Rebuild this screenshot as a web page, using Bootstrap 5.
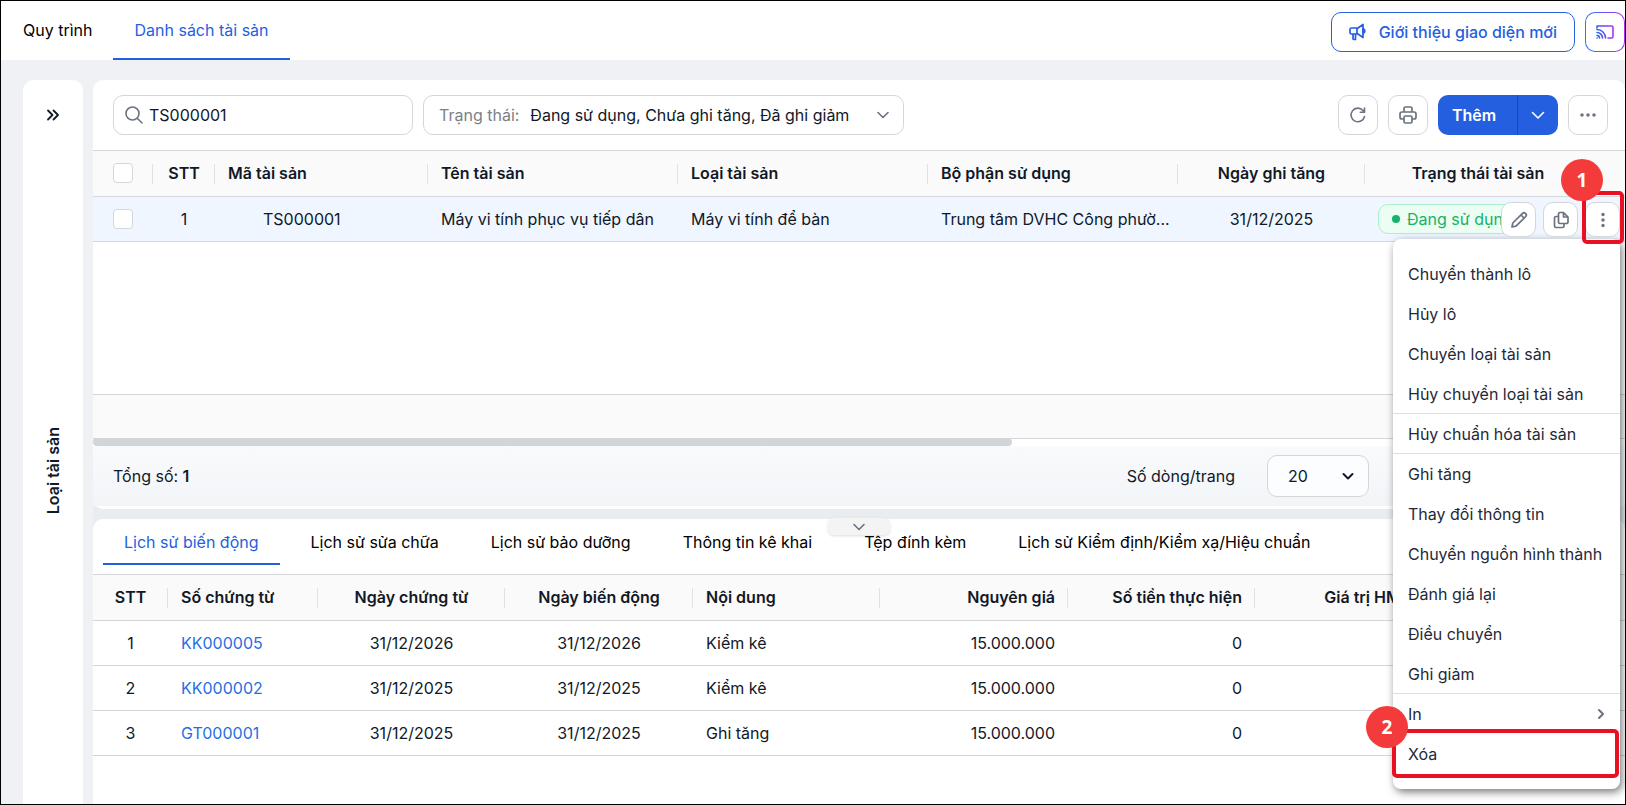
<!DOCTYPE html>
<html lang="vi">
<head>
<meta charset="utf-8">
<meta name="viewport" content="width=device-width, initial-scale=1">
<title>Danh sách tài sản</title>
<link href="https://cdn.jsdelivr.net/npm/bootstrap@5.3.0/dist/css/bootstrap.min.css" rel="stylesheet">
<style>
:root{--brand:#245fdf;--ink:#111827;--muted:#6b7280;--line:#d4d6da}
body{font-family:Inter,"Noto Sans",sans-serif;font-size:16px;line-height:24px;color:var(--ink);background:#f0f1f4}
button,input,select{font:inherit;color:inherit}
svg{display:block;fill:none;stroke:currentColor;stroke-width:2;stroke-linecap:round;stroke-linejoin:round}
.thin{stroke-width:1.6}
.frame{min-height:100vh;border:1px solid #000;overflow:hidden}
.topbar{height:59px}
.top-actions{gap:10px;padding-top:2px}
.tab-link{color:#000;text-decoration:none;display:flex;align-items:center;padding:2px 21px 0;border-bottom:2px solid transparent}
.tab-link.active{color:var(--brand);border-color:var(--brand)}
.topbar .tab-link{padding-top:0}
.topbar .tab-first{padding:0;margin:0 21px 0 22px}
.btn-intro{height:40px;border:1px solid var(--brand);border-radius:10px;background:#fff;color:var(--brand);padding:0 17px;font-weight:500}
.btn-cast{width:40px;height:40px;border:1px solid transparent;border-radius:10px;background:linear-gradient(#fff,#fff) padding-box,linear-gradient(90deg,#1f7cf5,#b52bf0) border-box}
.btn-cast svg{stroke:url(#castTone)}
.workspace{padding:20px 0 0 22px;gap:10px}
.side-rail{width:60px;border-radius:10px 10px 0 0;background:#fff}
.rail-btn{height:30px;margin:20px 0 8px;border:0;background:none}
.rail-title{writing-mode:vertical-rl;transform:rotate(180deg);font-weight:600}
.content-grid{display:grid;grid-template-rows:1fr 285px;gap:10px;min-width:0;background:linear-gradient(#f0f1f4 40%,#e9edf0 55%)}
.panel{background:#fff;border-radius:10px;min-width:0}
.panel-lower{border-radius:10px 10px 0 0}
.toolbar{height:70px;padding:0 17px 0 20px;gap:10px}
.field{height:40px;border:1px solid var(--line);border-radius:10px;background:#fff}
.field input,.field select{border:0;outline:0;background:none;appearance:none;padding:0;min-width:0}
.search-field{width:300px;padding:0 11px;gap:6px}
.status-field{width:481px;padding:0 13px 0 15px;gap:11px}
.status-field label{color:#7b7f87}
.icon-btn{width:40px;height:40px;border:1px solid var(--line);border-radius:10px;background:#fff;color:var(--muted);display:flex;align-items:center;justify-content:center;padding:0}
.split{height:40px}
.split .btn{background:var(--brand);color:#fff;border:0;border-radius:10px 0 0 10px;padding:0 14px;width:79px;font:600 16px/24px Inter,sans-serif;white-space:nowrap;text-align:left}
.split .btn + .btn{border-radius:0 10px 10px 0;border-left:1px solid #1a49b5;width:41px;padding:0 13px}
.grid-table{table-layout:fixed;margin:0;border-top:1px solid var(--line);color:var(--ink);white-space:nowrap;--bs-table-bg:transparent}
.grid-table th,.grid-table td{height:45px;padding:0 13px;vertical-align:middle;border-bottom:1px solid var(--line);overflow:hidden;text-overflow:ellipsis;color:inherit}
.grid-table th{height:46px;padding-bottom:1px;font-weight:600;background:#fafafa;position:relative}
.grid-table th:not(:last-child)::after{content:"";position:absolute;right:0;top:13px;height:20px;width:1px;background:#e0e2e6}
.grid-table a{color:#1f6fe5;text-decoration:none}
.row-hot td{background:#eff6ff}
.grid-table .form-check-input{width:20px;height:20px;margin:0;border:1px solid var(--line);border-radius:4px;display:block}
.grid-table .check-cell{padding-left:20px}
.grid-table .unit-cell{padding-right:0}
.grid-table .action-cell{overflow:visible;position:relative}
.state-pill{display:inline-flex;align-items:center;height:30px;border:1px solid #a7f3c5;border-radius:10px;background:#ecfdf3;color:#16b364;padding:0 13px;gap:7px}
.state-pill::before{content:"";width:8px;height:8px;border-radius:50%;background:#12b569}
.row-actions{position:absolute;right:5px;top:5px;z-index:5;display:flex;gap:7px}
.row-actions .icon-btn{width:35px;height:35px}
.summary{height:45px;border:solid var(--line);border-width:1px 0;background:#fafafa}
.scroll-track{height:8px;margin-top:-1px}
.scroll-track div{height:8px;width:60%;background:#d2d5d8;border-radius:4px;position:relative}
.pager{height:60px;margin-bottom:3px;padding:0 256px 0 20px;background:linear-gradient(#f9fafc,#f2f5f8)}
.page-size{width:102px;height:42px;padding:0 12px 0 20px;background:#fcfdfe}
.handle{position:absolute;left:50%;top:-1px;transform:translateX(-50%);width:62px;height:17px;border:0;border-radius:6px;background:#f4f4f5;box-shadow:0 1px 3px #0002;color:var(--muted)}
.sub-tabs{height:55px;padding:0 10px;gap:10px}
.sub-tabs .tab-link{height:46px}
.action-menu{position:absolute;right:5px;top:42px;width:227px;padding:15px 0;z-index:4;background:#fff;border-radius:8px;box-shadow:2px 3px 8px #0008;list-style:none;margin:0;color:#1f2937}
.action-menu button{display:flex;width:100%;height:40px;align-items:center;justify-content:space-between;padding:0 15px;border:0;background:none;text-align:left}
.action-menu .ruled{border-bottom:1px solid #dcdfe3}
.callout{position:absolute;border:4px solid #e81123;border-radius:5px;pointer-events:none;z-index:6}
.callout span{position:absolute;width:42px;height:42px;border-radius:50%;background:#f33b3b;color:#fff;font:700 19px/42px "Open Sans",sans-serif;text-align:center}
.callout-more{right:1px;top:-6px;width:42px;height:53px}
.callout-more span{left:-25px;top:-36px}
.callout-delete{right:1px;bottom:11px;width:227px;height:49px}
.callout-delete span{left:-30px;top:-27px}
</style>
</head>
<body>
<div class="frame d-flex flex-column">
  <header class="topbar bg-white d-flex align-items-stretch justify-content-between">
    <nav class="d-flex">
      <a href="#" class="tab-link tab-first">Quy trình</a>
      <a href="#" class="tab-link active" aria-current="page">Danh sách tài sản</a>
    </nav>
    <div class="top-actions d-flex align-items-center">
      <button class="btn-intro d-flex align-items-center" type="button">
        <svg width="18" height="18" viewBox="0 0 18 18"><path d="M9 5H2.500A1.500 1.500 0 0 0 1 6.500v3A1.500 1.500 0 0 0 2.500 11H9M8 5v6M9 5l5-3.500v13L9 11M4 11v4.500a1 1 0 0 0 1 1h1.500V11" stroke-width="1.700"/><path d="M14 5.500a2.600 2.600 0 0 1 0 5z" fill="currentColor" stroke-width="1.600"/></svg>
        <span class="ms-2 ps-1">Giới thiệu giao diện mới</span>
      </button>
      <button class="btn-cast d-flex align-items-center justify-content-center p-0" type="button" aria-label="Trình chiếu">
        <svg class="thin" width="20" height="20" viewBox="0 0 20 20"><defs><linearGradient id="castTone" gradientUnits="userSpaceOnUse" x1="2" y1="0" x2="18" y2="0"><stop stop-color="#2468f2"/><stop offset="1" stop-color="#b52bf0"/></linearGradient></defs><path d="M2 6V4h14.500a1.500 1.500 0 0 1 1.500 1.500v9a1.500 1.500 0 0 1-1.500 1.500H13M2 7.500a8.500 8.500 0 0 1 8.500 8.500M2 10.500A5.500 5.500 0 0 1 7.500 16M2 13.500A2.500 2.500 0 0 1 4.500 16M2 16h.1"/></svg>
      </button>
    </div>
  </header>

  <div class="workspace d-flex flex-grow-1">
    <aside class="side-rail d-flex flex-column align-items-center flex-shrink-0">
      <button class="rail-btn" type="button" aria-label="Mở rộng"><svg width="14" height="14" viewBox="0 0 14 14"><path d="m2 2.500 4.500 4.500L2 11.500M7.500 2.500 12 7l-4.500 4.500" stroke-width="1.800"/></svg></button>
      <div class="flex-grow-1 d-flex align-items-center"><span class="rail-title">Loại tài sản</span></div>
    </aside>

    <main class="content-grid flex-grow-1">
      <section class="panel d-flex flex-column">
        <div class="toolbar d-flex align-items-center">
          <label class="field search-field d-flex align-items-center text-nowrap">
            <svg class="thin flex-shrink-0" width="18" height="18" viewBox="0 0 18 18" color="#6b7280"><circle cx="7.500" cy="7.500" r="6.500"/><path d="m12.500 12.500 4.500 4.500"/></svg>
            <input class="flex-grow-1" type="text" value="TS000001" aria-label="Tìm kiếm">
          </label>
          <div class="field status-field d-flex align-items-center">
            <label class="text-nowrap" for="status">Trạng thái:</label>
            <select id="status" class="flex-grow-1"><option>Đang sử dụng, Chưa ghi tăng, Đã ghi giảm</option></select>
            <svg class="thin flex-shrink-0" width="14" height="14" viewBox="0 0 14 14" color="#6b7280"><path d="m2 4.500 5 5 5-5"/></svg>
          </div>
          <button class="icon-btn ms-auto" type="button" aria-label="Tải lại"><svg width="18" height="18" viewBox="0 0 18 18"><path d="M15.500 10.500A6.800 6.800 0 1 1 14 4.500l1.500 1.700M15.500 2v4.200h-4.200" stroke-width="1.600"/></svg></button>
          <button class="icon-btn" type="button" aria-label="In"><svg width="18" height="18" viewBox="0 0 18 18"><path d="M5 6V2.500A1.500 1.500 0 0 1 6.500 1h5A1.500 1.500 0 0 1 13 2.500V6M5 13H3a2 2 0 0 1-2-2V8a2 2 0 0 1 2-2h12a2 2 0 0 1 2 2v3a2 2 0 0 1-2 2h-2M5 11.500A1.500 1.500 0 0 1 6.500 10h5a1.500 1.500 0 0 1 1.500 1.500v4a1.500 1.500 0 0 1-1.500 1.500h-5A1.500 1.500 0 0 1 5 15.500z" stroke-width="1.700"/></svg></button>
          <div class="split d-flex">
            <button class="btn" type="button">Thêm</button>
            <button class="btn" type="button" aria-label="Thêm lựa chọn"><svg class="thin" width="14" height="14" viewBox="0 0 14 14"><path d="m1.500 4.500 5.500 5.500 5.500-5.500"/></svg></button>
          </div>
          <button class="icon-btn" type="button" aria-label="Khác"><svg width="18" height="18" viewBox="0 0 18 18"><path d="M3 9h.01M9 9h.01M15 9h.01" stroke-width="3.500"/></svg></button>
        </div>

        <div>
          <table class="table grid-table">
            <colgroup><col style="width:60px"><col style="width:62px"><col style="width:213px"><col style="width:250px"><col style="width:250px"><col style="width:250px"><col style="width:187px"><col style="width:226px"><col></colgroup>
            <thead><tr>
              <th class="check-cell"><input class="form-check-input" type="checkbox" aria-label="Chọn tất cả"></th>
              <th class="text-center">STT</th><th>Mã tài sản</th><th>Tên tài sản</th><th>Loại tài sản</th><th>Bộ phận sử dụng</th><th class="text-center">Ngày ghi tăng</th><th class="text-center">Trạng thái tài sản</th><th></th>
            </tr></thead>
            <tbody><tr class="row-hot">
              <td class="check-cell"><input class="form-check-input" type="checkbox" aria-label="Chọn TS000001"></td>
              <td class="text-center">1</td><td class="ps-5">TS000001</td><td>Máy vi tính phục vụ tiếp dân</td><td>Máy vi tính để bàn</td><td class="unit-cell">Trung tâm DVHC Công phườ...</td><td class="text-center">31/12/2025</td>
              <td><span class="state-pill">Đang sử dụng</span></td>
              <td class="action-cell">
                <div class="row-actions">
                  <button class="icon-btn" type="button" aria-label="Sửa"><svg width="18" height="18" viewBox="0 0 18 18"><path d="m2 16 .8-4L12.500 2.300a2 2 0 0 1 2.800 0l.4.4a2 2 0 0 1 0 2.800L6 15.200zM11 4l3 3" stroke-width="1.700"/></svg></button>
                  <button class="icon-btn" type="button" aria-label="Nhân bản"><svg width="18" height="18" viewBox="0 0 18 18"><path d="M11.500 1.500H8A1.500 1.500 0 0 0 6.500 3v8A1.500 1.500 0 0 0 8 12.500h6.500A1.500 1.500 0 0 0 16 11V6zM11.500 1.500V6H16M6.500 5.500H4A1.500 1.500 0 0 0 2.500 7v8A1.500 1.500 0 0 0 4 16.500h6.500A1.500 1.500 0 0 0 12 15v-2.500" stroke-width="1.700"/></svg></button>
                  <button class="icon-btn" type="button" aria-label="Thao tác khác" aria-expanded="true"><svg width="18" height="18" viewBox="0 0 18 18"><path d="M9 3.500v.01M9 9v.01M9 14.500v.01" stroke-width="3.500"/></svg></button>
                </div>
                <div class="callout callout-more"><span>1</span></div>
                <ul class="action-menu">
                  <li><button type="button">Chuyển thành lô</button></li>
                  <li><button type="button">Hủy lô</button></li>
                  <li><button type="button">Chuyển loại tài sản</button></li>
                  <li><button type="button" class="ruled">Hủy chuyển loại tài sản</button></li>
                  <li><button type="button" class="ruled">Hủy chuẩn hóa tài sản</button></li>
                  <li><button type="button">Ghi tăng</button></li>
                  <li><button type="button">Thay đổi thông tin</button></li>
                  <li><button type="button">Chuyển nguồn hình thành</button></li>
                  <li><button type="button">Đánh giá lại</button></li>
                  <li><button type="button">Điều chuyển</button></li>
                  <li><button type="button" class="ruled">Ghi giảm</button></li>
                  <li><button type="button">In <svg width="8" height="12" viewBox="0 0 8 12" color="#6b7280"><path d="m2 2 4 4-4 4"/></svg></button></li>
                  <li><button type="button">Xóa</button></li>
                  <li class="callout callout-delete"><span>2</span></li>
                </ul>
              </td>
            </tr></tbody>
          </table>
        </div>

        <div class="summary mt-auto"></div>
        <div class="scroll-track"><div></div></div>
        <div class="pager d-flex align-items-center justify-content-between">
          <span>Tổng số: <b class="fw-semibold">1</b></span>
          <div class="d-flex align-items-center">
            <label for="size" class="me-4 pe-2">Số dòng/trang</label>
            <div class="field page-size d-flex align-items-center">
              <select id="size" class="flex-grow-1"><option>20</option></select>
              <svg class="flex-shrink-0" width="16" height="16" viewBox="0 0 16 16"><path d="m3.500 6 4.500 4.500L12.500 6"/></svg>
            </div>
          </div>
        </div>
      </section>

      <section class="panel panel-lower position-relative">
        <button class="handle d-flex align-items-center justify-content-center" type="button" aria-label="Thu gọn"><svg class="thin" width="14" height="14" viewBox="0 0 14 14"><path d="m2 4.500 5 5 5-5"/></svg></button>
        <nav class="sub-tabs d-flex text-nowrap">
          <a href="#" class="tab-link active">Lịch sử biến động</a>
          <a href="#" class="tab-link">Lịch sử sửa chữa</a>
          <a href="#" class="tab-link">Lịch sử bảo dưỡng</a>
          <a href="#" class="tab-link">Thông tin kê khai</a>
          <a href="#" class="tab-link">Tệp đính kèm</a>
          <a href="#" class="tab-link">Lịch sử Kiểm định/Kiểm xạ/Hiệu chuẩn</a>
        </nav>
        <table class="table grid-table">
          <colgroup><col style="width:75px"><col style="width:150px"><col style="width:187px"><col style="width:188px"><col style="width:187px"><col style="width:188px"><col style="width:187px"><col style="width:188px"><col></colgroup>
          <thead><tr><th class="text-center">STT</th><th>Số chứng từ</th><th class="text-center">Ngày chứng từ</th><th class="text-center">Ngày biến động</th><th>Nội dung</th><th class="text-end">Nguyên giá</th><th class="text-end">Số tiền thực hiện</th><th class="text-end">Giá trị HM/KH</th><th></th></tr></thead>
          <tbody>
            <tr><td class="text-center">1</td><td><a href="#">KK000005</a></td><td class="text-center">31/12/2026</td><td class="text-center">31/12/2026</td><td>Kiểm kê</td><td class="text-end">15.000.000</td><td class="text-end">0</td><td></td><td></td></tr>
            <tr><td class="text-center">2</td><td><a href="#">KK000002</a></td><td class="text-center">31/12/2025</td><td class="text-center">31/12/2025</td><td>Kiểm kê</td><td class="text-end">15.000.000</td><td class="text-end">0</td><td></td><td></td></tr>
            <tr><td class="text-center">3</td><td><a href="#">GT000001</a></td><td class="text-center">31/12/2025</td><td class="text-center">31/12/2025</td><td>Ghi tăng</td><td class="text-end">15.000.000</td><td class="text-end">0</td><td></td><td></td></tr>
          </tbody>
        </table>
      </section>
    </main>
  </div>
</div>
<script src="https://cdn.jsdelivr.net/npm/bootstrap@5.3.0/dist/js/bootstrap.bundle.min.js"></script>
</body>
</html>
